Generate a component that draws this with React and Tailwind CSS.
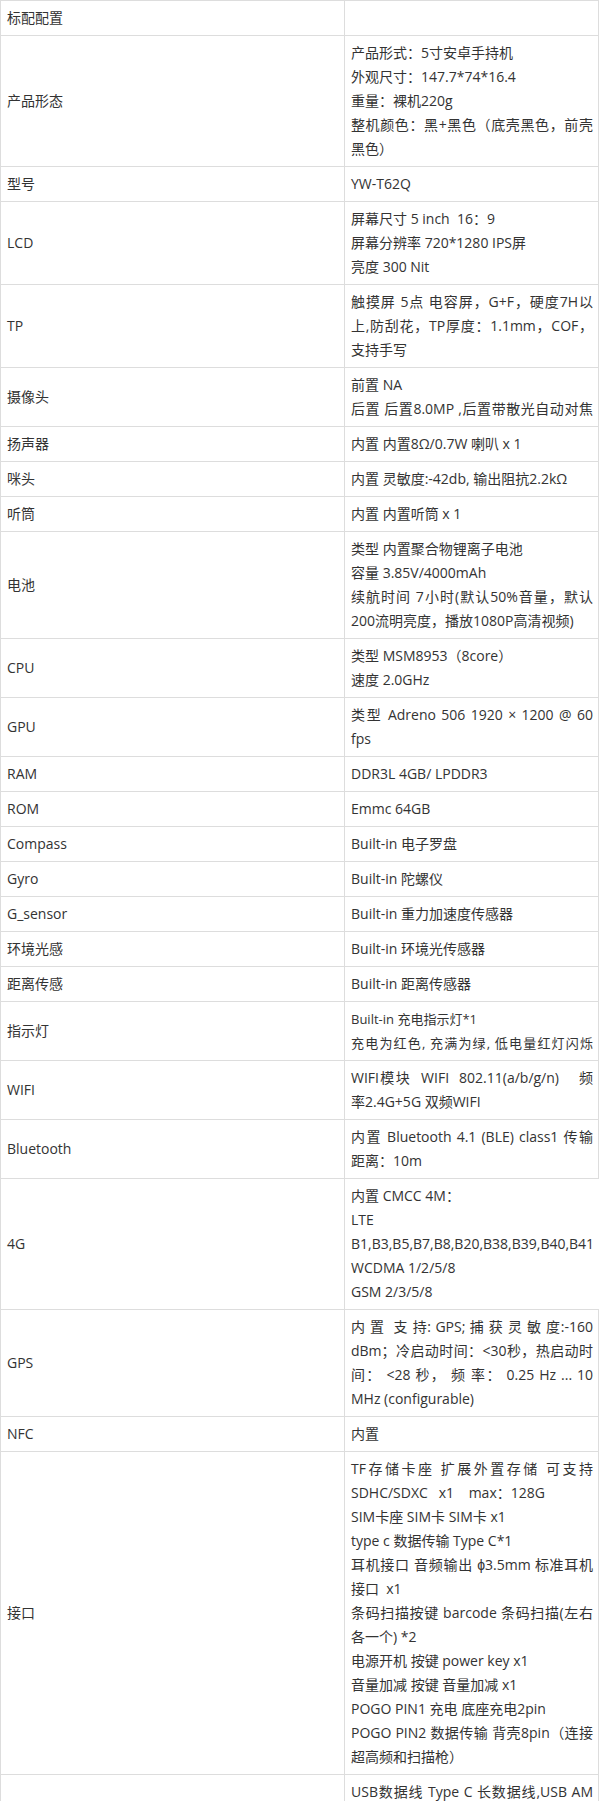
const rows = [
  { label: "标配配置", lines: [] },
  {
    label: "产品形态",
    lines: [
      "产品形式：5寸安卓手持机",
      "外观尺寸：147.7*74*16.4",
      "重量：裸机220g",
      { t: "整机颜色：黑+黑色（底壳黑色，前壳", j: true },
      "黑色）",
    ],
  },
  { label: "型号", lines: ["YW-T62Q"] },
  {
    label: "LCD",
    lines: ["屏幕尺寸 5 inch  16：9", "屏幕分辨率 720*1280 IPS屏", "亮度 300 Nit"],
  },
  {
    label: "TP",
    lines: [
      { t: "触摸屏 5点 电容屏，G+F，硬度7H以", j: true },
      { t: "上,防刮花，TP厚度：1.1mm，COF，", j: true },
      "支持手写",
    ],
  },
  {
    label: "摄像头",
    lines: ["前置 NA", { t: "后置 后置8.0MP ,后置带散光自动对焦", j: true }],
  },
  { label: "扬声器", lines: ["内置 内置8Ω/0.7W 喇叭 x 1"] },
  { label: "咪头", lines: ["内置 灵敏度:-42db, 输出阻抗2.2kΩ"] },
  { label: "听筒", lines: ["内置 内置听筒 x 1"] },
  {
    label: "电池",
    lines: [
      "类型 内置聚合物锂离子电池",
      "容量 3.85V/4000mAh",
      { t: "续航时间 7小时(默认50%音量，默认", j: true },
      "200流明亮度，播放1080P高清视频)",
    ],
  },
  { label: "CPU", lines: ["类型 MSM8953（8core）", "速度 2.0GHz"] },
  {
    label: "GPU",
    lines: [{ t: "类型 Adreno 506 1920 × 1200 @ 60", j: true }, "fps"],
  },
  { label: "RAM", lines: ["DDR3L 4GB/ LPDDR3"] },
  { label: "ROM", lines: ["Emmc 64GB"] },
  { label: "Compass", lines: ["Built-in 电子罗盘"] },
  { label: "Gyro", lines: ["Built-in 陀螺仪"] },
  { label: "G_sensor", lines: ["Built-in 重力加速度传感器"] },
  { label: "环境光感", lines: ["Built-in 环境光传感器"] },
  { label: "距离传感", lines: ["Built-in 距离传感器"] },
  {
    label: "指示灯",
    small: true,
    lines: ["Built-in 充电指示灯*1", { t: "充电为红色, 充满为绿, 低电量红灯闪烁", j: true }],
  },
  {
    label: "WIFI",
    lines: [
      { t: "WIFI模块  WIFI  802.11(a/b/g/n)    频", j: true },
      "率2.4G+5G 双频WIFI",
    ],
  },
  {
    label: "Bluetooth",
    lines: [{ t: "内置 Bluetooth 4.1 (BLE) class1 传输", j: true }, "距离：10m"],
  },
  {
    label: "4G",
    lines: [
      "内置 CMCC 4M：",
      "LTE",
      "B1,B3,B5,B7,B8,B20,B38,B39,B40,B41",
      "WCDMA 1/2/5/8",
      "GSM 2/3/5/8",
    ],
  },
  {
    label: "GPS",
    lines: [
      { t: "内 置  支 持: GPS; 捕 获 灵 敏 度:-160", j: true },
      { t: "dBm；冷启动时间：<30秒，热启动时", j: true },
      { t: "间： <28 秒， 频 率： 0.25 Hz ... 10", j: true },
      "MHz (configurable)",
    ],
  },
  { label: "NFC", lines: ["内置"] },
  {
    label: "接口",
    lines: [
      { t: "TF存储卡座 扩展外置存储 可支持", j: true },
      "SDHC/SDXC   x1    max：128G",
      "SIM卡座 SIM卡 SIM卡 x1",
      "type c 数据传输 Type C*1",
      { t: "耳机接口 音频输出 ϕ3.5mm 标准耳机", j: true },
      "接口  x1",
      { t: "条码扫描按键 barcode 条码扫描(左右", j: true },
      "各一个) *2",
      "电源开机 按键 power key x1",
      "音量加减 按键 音量加减 x1",
      "POGO PIN1 充电 底座充电2pin",
      { t: "POGO PIN2 数据传输 背壳8pin（连接", j: true },
      "超高频和扫描枪）",
    ],
  },
  {
    label: "配件",
    lines: [
      { t: "USB数据线 Type C 长数据线,USB AM", j: true },
      "to Type C x1",
      "充电器 5V/2A x1",
      "腕带 x1",
    ],
  },
];

function Line({ line }) {
  if (typeof line === "string") {
    return <div className="whitespace-pre">{line}</div>;
  }
  return <div className="whitespace-pre [text-align-last:justify]">{line.t}</div>;
}

export default function App() {
  return (
    <div
      className="w-[599px] bg-white text-[14px] leading-[24px] text-[#333]"
      style={{ fontFamily: '"Open Sans", "Noto Sans CJK SC", sans-serif' }}
    >
      <div className="border-t border-l border-[#ddd]">
        {rows.map((row, idx) => (
          <div key={idx} className="grid grid-cols-[344px_1fr] border-b border-[#ddd]">
            <div className="flex items-center border-r border-[#ddd] px-[6px] py-[5px]">
              {row.label}
            </div>
            <div
              className={
                "border-r border-[#ddd] py-[5px] pl-[6px] pr-[5px] min-h-[34px] " +
                (row.small ? "text-[13px]" : "")
              }
            >
              {row.lines.map((line, i) => (
                <Line key={i} line={line} />
              ))}
            </div>
          </div>
        ))}
      </div>
    </div>
  );
}
